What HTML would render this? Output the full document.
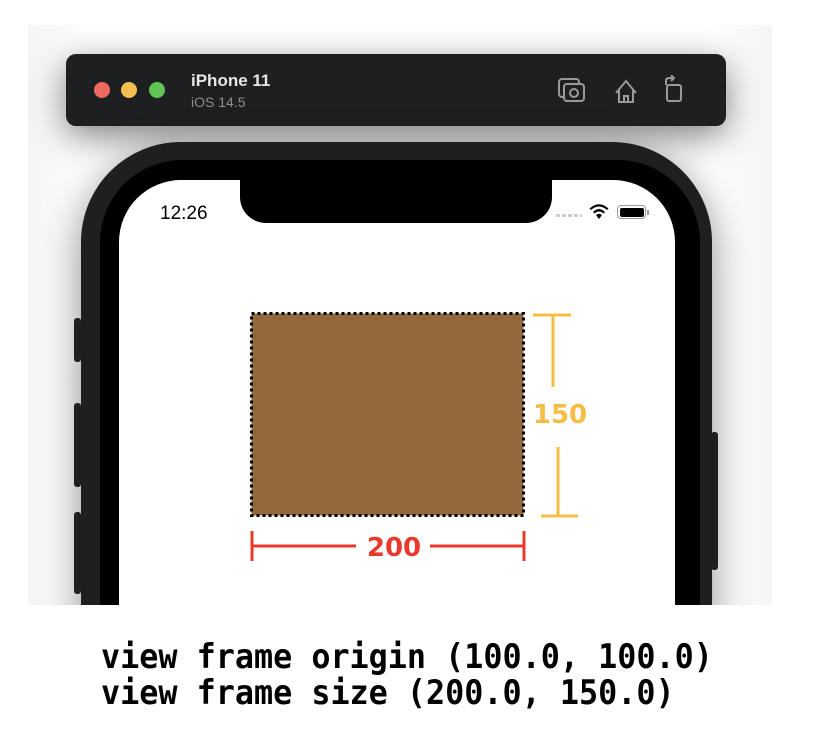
<!DOCTYPE html>
<html><head><meta charset="utf-8"><style>
body{margin:0;width:826px;height:756px;background:#fff;position:relative;overflow:hidden;font-family:"Liberation Sans",sans-serif}
.bg{position:absolute;left:28px;top:25px;width:744px;height:580px;background:linear-gradient(90deg,#f5f5f5 0,#fff 8%,#fff 92%,#f5f5f5 100%);overflow:hidden}
.abs{position:absolute}
</style></head><body>
<div class="bg">
  <div class="abs" style="left:38px;top:29px;width:660px;height:72px;border-radius:10px;background:#1e1f21;box-shadow:0 10px 35px rgba(0,0,0,.5)"></div>
  <div class="abs" style="left:53px;top:117px;width:631px;height:600px;border-radius:100px;background:#1f1f1f;box-shadow:0 10px 40px rgba(0,0,0,.45)"></div>
  <div class="abs" style="left:72px;top:135px;width:600px;height:600px;border-radius:82px;background:#000"></div>
  <div class="abs" style="left:91px;top:155px;width:556px;height:600px;border-radius:62px;background:#fff"></div>
  <div class="abs" style="left:46px;top:293px;width:7px;height:44px;border-radius:3px;background:#1f1f1f"></div>
  <div class="abs" style="left:46px;top:378px;width:7px;height:84px;border-radius:3px;background:#1f1f1f"></div>
  <div class="abs" style="left:46px;top:487px;width:7px;height:82px;border-radius:3px;background:#1f1f1f"></div>
  <div class="abs" style="left:683px;top:407px;width:7px;height:138px;border-radius:3px;background:#1f1f1f"></div>
</div>
<div class="abs" style="left:94px;top:82px;width:16px;height:16px;border-radius:50%;background:#ec6a5f"></div>
<div class="abs" style="left:121px;top:82px;width:16px;height:16px;border-radius:50%;background:#f4bf4f"></div>
<div class="abs" style="left:149px;top:82px;width:16px;height:16px;border-radius:50%;background:#61c554"></div>
<div class="abs" style="left:191px;top:71px;color:#e6e6e6;font-weight:bold;font-size:17px">iPhone 11</div>
<div class="abs" style="left:191px;top:94px;color:#8e8e8e;font-size:14px">iOS 14.5</div>
<svg class="abs" style="left:555px;top:75px" width="140" height="32" viewBox="0 0 140 32" fill="none" stroke="#9a9a9a" stroke-width="2">
  <rect x="4" y="4" width="20" height="18" rx="3"/><rect x="9" y="9" width="20" height="17" rx="3" fill="#1e1f21"/><circle cx="19" cy="18" r="4"/>
  <path d="M61 18 L71 6 L81 18 M64 15 V27 H78 V15 M69 27 V21 H73 V27"/>
  <rect x="112" y="10" width="14" height="16" rx="2"/><path d="M111 10 V6 Q111 3 114 3 H118 M116 0 L119 3 L116 6"/>
</svg>
<div class="abs" style="left:240px;top:160px;width:312px;height:63px;background:#000;border-radius:0 0 26px 26px"></div>
<div class="abs" style="left:160px;top:203px;font-size:19px;color:#000">12:26</div>
<div class="abs" style="left:556px;top:214px;width:26px;height:3px;background:repeating-linear-gradient(90deg,#ccc 0 4px,transparent 4px 6px)"></div>
<svg class="abs" style="left:588px;top:203px" width="22" height="18" viewBox="0 0 22 18"><path d="M11 16 L8 12 Q11 9.5 14 12Z M5 9 Q11 3 17 9 L15.5 10.5 Q11 6.5 6.5 10.5Z M1.5 5.5 Q11 -3 20.5 5.5 L19 7 Q11 0 3 7Z" fill="#000"/></svg>
<div class="abs" style="left:617px;top:205px;width:29px;height:14px;border:1.5px solid #999;border-radius:4px;box-sizing:border-box;padding:1.5px"><div style="width:100%;height:100%;background:#000;border-radius:2px"></div></div>
<div class="abs" style="left:647px;top:210px;width:2px;height:5px;background:#999"></div>
<svg class="abs" style="left:240px;top:305px" width="360" height="260">
 <rect x="11.5" y="8.5" width="272" height="202" fill="#93683c" stroke="#000" stroke-width="3" stroke-dasharray="3 3"/>
 <g stroke="#f5bd45" stroke-width="3"><path d="M293 10 H331 M313 10 V82 M318 142 V211 M301 211 H338"/></g>
 <text x="320" y="118" fill="#f5bd45" font-family="DejaVu Sans, sans-serif" font-weight="bold" font-size="26" text-anchor="middle">150</text>
 <g stroke="#e8392c" stroke-width="3"><path d="M12 226 V256 M12 241 H116 M190 241 H284 M284 226 V256"/></g>
 <text x="154" y="251" fill="#e8392c" font-family="DejaVu Sans, sans-serif" font-weight="bold" font-size="26" text-anchor="middle">200</text>
</svg>
<div class="abs" style="left:101px;top:639px;font-family:'DejaVu Sans Mono',monospace;font-weight:bold;font-size:33.5px;line-height:36px;color:#000;white-space:pre;transform:scaleX(0.948);transform-origin:0 0">view frame origin (100.0, 100.0)
view frame size (200.0, 150.0)</div>
</body></html>
